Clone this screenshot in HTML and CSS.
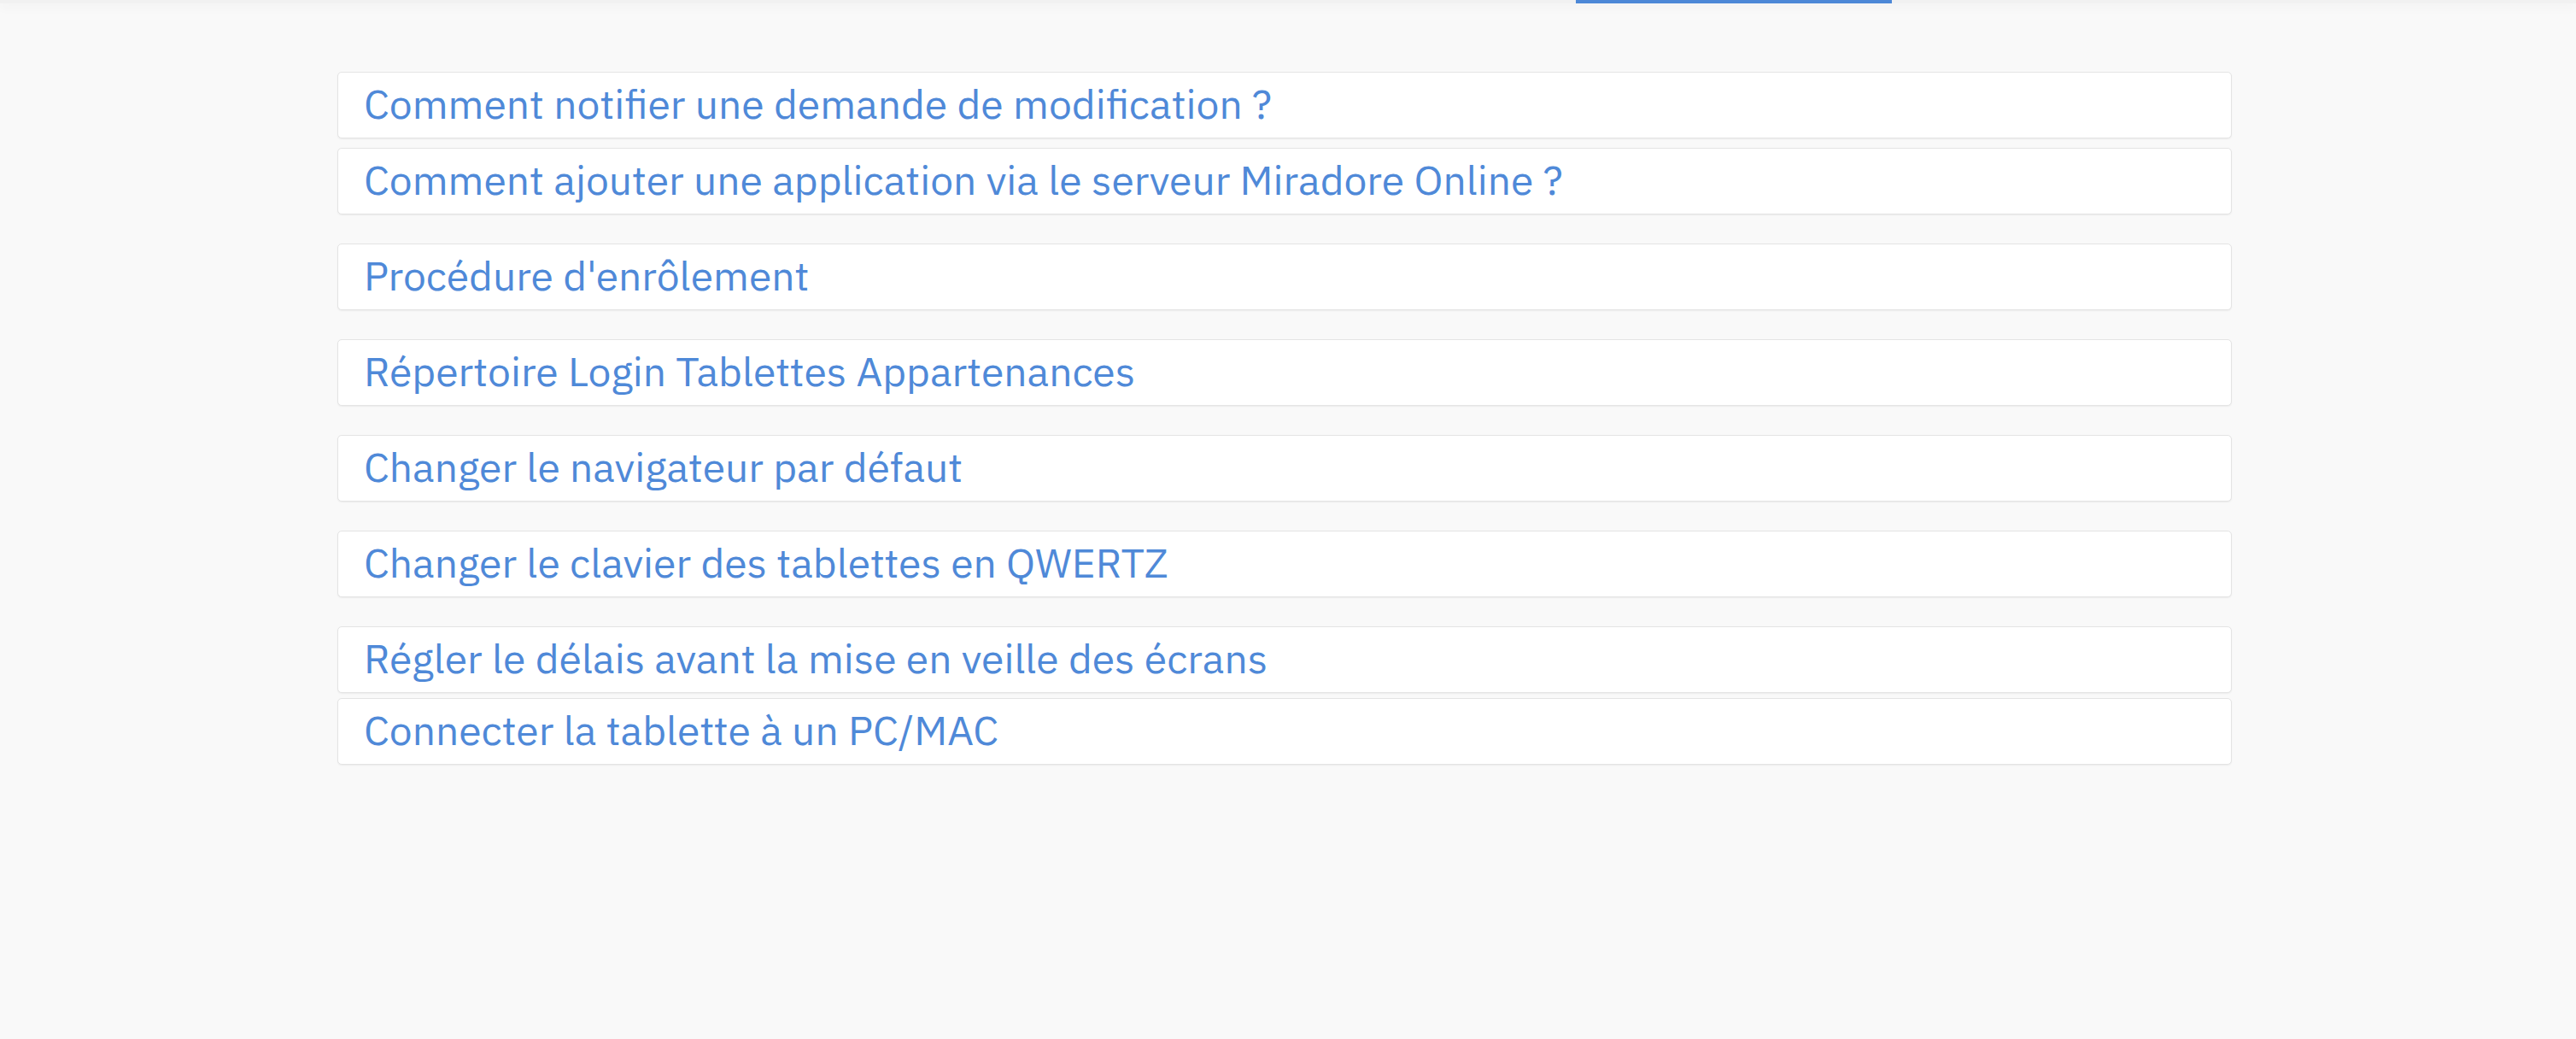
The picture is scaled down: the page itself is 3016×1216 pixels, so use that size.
FILE: index.html
```html
<!DOCTYPE html>
<html lang="fr">
<head>
<meta charset="utf-8">
<title>FAQ</title>
<link rel="stylesheet" href="styles.css">
</head>
<body>
<header class="topbar">
  <div class="topbar-spacer"></div>
  <div class="topbar-active"></div>
</header>
<main class="faq">
  <a class="card" href="#">Comment notifier une demande de modification ?</a>
  <a class="card gap-s" href="#">Comment ajouter une application via le serveur Miradore Online ?</a>
  <a class="card gap-l" href="#">Procédure d'enrôlement</a>
  <a class="card gap-l" href="#">Répertoire Login Tablettes Appartenances</a>
  <a class="card gap-l" href="#">Changer le navigateur par défaut</a>
  <a class="card gap-l" href="#">Changer le clavier des tablettes en QWERTZ</a>
  <a class="card gap-l" href="#">Régler le délais avant la mise en veille des écrans</a>
  <a class="card gap-xs" href="#">Connecter la tablette à un PC/MAC</a>
</main>
</body>
</html>
```
FILE: styles.css
```css
html, body {
  margin: 0;
  padding: 0;
}
body {
  background: #f9f9f9;
  font-family: "IBM Plex Sans", Roboto, "Liberation Sans", sans-serif;
  height: 1216px;
  overflow: hidden;
}
.topbar {
  display: flex;
  height: 4px;
  background: #f1f1f1;
  box-shadow: 0 4px 12px rgba(0, 0, 0, 0.06);
  position: relative;
}
.topbar-spacer {
  width: 1845px;
}
.topbar-active {
  width: 370px;
  background: #4d88d7;
}
.faq {
  display: flex;
  flex-direction: column;
  width: 2218px;
  margin-left: 395px;
  padding-top: 80px;
}
.card {
  display: block;
  box-sizing: border-box;
  height: 78px;
  background: #ffffff;
  border: 1px solid #e4e4e4;
  border-radius: 5px;
  box-shadow: 0 1px 2px rgba(0, 0, 0, 0.06);
  padding: 8px 30px 12px 30px;
  font-size: 48px;
  line-height: 56px;
  color: #4f89d8;
  text-decoration: none;
  white-space: nowrap;
}
.gap-xs { margin-top: 6px; }
.gap-s { margin-top: 11px; }
.gap-l { margin-top: 34px; }
```
